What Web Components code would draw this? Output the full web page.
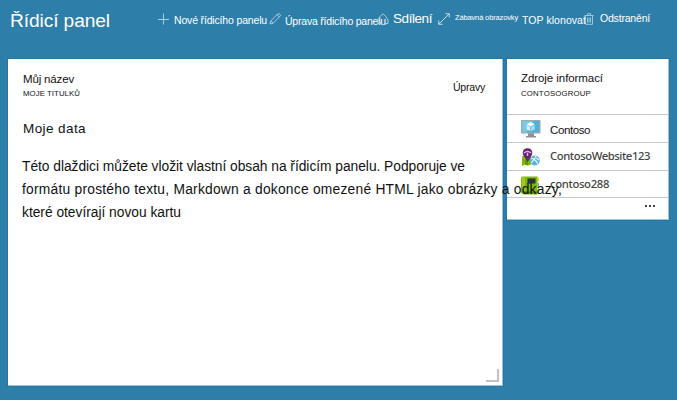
<!DOCTYPE html>
<html lang="cs">
<head>
<meta charset="utf-8">
<title>Řídicí panel</title>
<style>
html,body{margin:0;height:100%}
body{background:#2e7eaa;font-family:"Liberation Sans",Arial,sans-serif;overflow:hidden}
</style>
</head>
<body>
<dash-board></dash-board>
<script>
// A line of text whose tracking is adjusted to fill the given width.
class FitText extends HTMLElement {
  connectedCallback() {
    const root = this.attachShadow({mode:'open'});
    const size = this.getAttribute('size'), width = +this.getAttribute('width');
    root.innerHTML = `<style>
      :host{display:block;flex:none;width:${width}px;height:20px;line-height:20px;font-size:${size}px;white-space:nowrap}
      span{display:inline-block}
    </style><span><slot></slot></span>`;
    const span = root.querySelector('span');
    const extra = width - span.getBoundingClientRect().width;
    span.style.letterSpacing = (extra / this.textContent.length) + 'px';
  }
}

const icons = {
  plus:['0 0 12 12','<path d="M6.500 .5v11M1 6.500h11" stroke="#a9cde0" fill="none"/>'],
  pencil:['0 0 12 12','<path d="M1 11l.8-3.2L8.9.8Q10 .3 11 1.4q.8 1 .2 1.8L4.1 10.200zM8 1.700l2.300 2.300M1.900 7.800l2.200 2.300" stroke="#b4d3e3" fill="none" stroke-width=".9"/>'],
  bell:['0 0 12 13','<path d="M1 10.500V7Q1.300 5.500 2.500 5.200V4L6 .8l3.500 3.200v1.200Q11 5.700 11 7v3.500H8.500M1 10.500h2.500M3.500 9v2q2.500 1.600 5 0V9" stroke="#a9cde0" fill="none"/>'],
  expand:['0 0 12 12','<path d="M1 11L11 1M7.500.7h3.800v3.800M.7 7.500v3.800h3.800" stroke="#c0dae7" fill="none"/>'],
  trash:['0 0 10 12','<path d="M.5 2.500h9M3.500 2V.7h3V2M1.500 3v8.300h7V3M3.500 4.500v5M5 4.500v5M6.500 4.500v5" stroke="#a9cde0" fill="none" stroke-width=".9"/>'],
  monitor:['0 0 20 18','<path fill="#8b9195" d="M7 13h6v3h2v1.500H5V16h2z"/><path fill="#a0a8ac" d="M0 0h19.500v13.500H0z"/><path fill="#48b4d8" d="M1.200 1h17v11.300h-17z"/><path fill="#78cae4" d="M1.200 1h11L6 12.300H1.200z"/><path fill="#fff" d="M9.700 2l4 2.200-4 2.200-4-2.200z"/><path fill="#d2edf6" d="M5.600 5l3.700 2v4.200l-3.700-2z"/><path fill="#a5dcee" d="M13.800 5l-3.700 2v4.200l3.700-2z"/>'],
  website:['0 0 20 19','<path fill="#7fba00" d="M1 8.500l3-1 3 1 3-1v9l-3 1-3-1-3 1.500z"/><path fill="#5f9500" d="M4 8v8.600l3 1V8.500z"/><circle cx="6.500" cy="5" r="4.800" fill="#68217a"/><path fill="#68217a" d="M2.800 7.500L6.800 14l3.700-6.500z"/><path d="M3 5q3.600-3 7 0M6.500 5v3" stroke="#d9b7df" stroke-width="1.400" fill="none"/><circle cx="13.800" cy="12.500" r="5" fill="#59b4d9"/><path d="M10 10.500q4 .1 6.700 5M15.500 8.500q-2.700 3-5.200 6.500M14 8q2 3 4 4" stroke="#fff" stroke-width="1.100" fill="none"/>'],
  notebook:['0 0 20 20','<path fill="#f5cf22" d="M16.500 1.500H18v4h-1.500z"/><path fill="#59b4d9" d="M16.500 7H18v4h-1.500z"/><path fill="#e8d52c" d="M16.500 12.500H18v4h-1.500z"/><path fill="#7fba00" d="M1 .5h15.500v18H3Q0 18 0 15.500V1.500z"/><path fill="#528000" d="M1.500 15.500h15v2H3z"/><path fill="#9acb28" d="M1 1h3v14H1z"/><path fill="#28333d" d="M6.500 2.500h8v5h-8z"/>']
};
// Vector symbol chosen by name.
class UiIcon extends HTMLElement {
  connectedCallback() {
    const [box, art] = icons[this.getAttribute('name')];
    const [, , w, h] = box.split(' ');
    this.attachShadow({mode:'open'}).innerHTML =
      `<style>:host{display:block;flex:none;width:${w}px;height:${h}px}svg{display:block}</style><svg width="${w}" height="${h}" viewBox="${box}">${art}</svg>`;
  }
}

class BarAction extends HTMLElement {
  connectedCallback() {
    this.attachShadow({mode:'open'}).innerHTML =
      `<style>:host{display:flex;align-items:flex-start}::slotted(ui-icon){margin-top:13px;margin-right:5px}</style><slot name="icon"></slot><slot></slot>`;
  }
}

class TileCard extends HTMLElement {
  connectedCallback() {
    this.attachShadow({mode:'open'}).innerHTML =
      `<style>:host{display:flex;flex-direction:column;box-sizing:border-box;background:#fff;color:#111;box-shadow:0 0 0 1px #2576a2,inset -1px -1px #9ac5dc}</style><slot></slot>`;
  }
}

class ResourceRow extends HTMLElement {
  connectedCallback() {
    this.attachShadow({mode:'open'}).innerHTML =
      `<style>:host{display:flex;box-sizing:border-box;border-top:1px solid #c8c8c8;padding-left:14px}
      .icon{width:29px;flex:none;padding-top:5px}.label{padding-top:var(--label-top,5px)}</style><div class="icon"><slot name="icon"></slot></div><div class="label"><slot></slot></div>`;
  }
}

class DashBoard extends HTMLElement {
  connectedCallback() {
    this.attachShadow({mode:'open'}).innerHTML = `<style>
      :host{display:block;width:677px;height:400px}
      header{display:grid;grid-template-columns:147px 112px 108px 61px 84px 62px 80px;height:59px;padding-left:10px;color:#fff}
      .title{padding-top:11px}
      main{display:grid;grid-template-columns:495px 162px;gap:4px;padding-left:8px;align-items:start}
      .note{position:relative;z-index:1;height:327px;padding:10px 0 0 15px}
      .head{display:flex;justify-content:space-between;height:51px;padding-right:18px}
      .sub{margin-top:-5px}
      .copy{margin-top:16px;margin-left:-1px}
      .copy fit-text{height:23px;line-height:23px}
      .grip{position:absolute;right:4px;bottom:4px;width:11px;height:11px;border-right:2px solid #c2c2c2;border-bottom:2px solid #c2c2c2}
      .list{height:161px}
      .list .intro{height:55px;box-sizing:border-box;padding:9px 0 0 14px}
      .list .sub{margin-top:-4px}
      resource-row{height:28px}
      resource-row:nth-of-type(3){height:27px}
      .segoe{font-family:"Noto Sans","Open Sans",sans-serif;font-weight:500;color:#444}
      .more{display:flex;justify-content:flex-end;gap:2px;border-top:1px solid #c8c8c8;padding:7px 14px 0 0}
      .more i{width:2px;height:2px;background:#444}
    </style>
    <header>
      <fit-text class="title" size="19.2" width="100">Řídicí panel</fit-text>
      <bar-action><ui-icon slot="icon" name="plus"></ui-icon><fit-text size="10.5" width="93" style="margin-top:10px">Nové řídicího panelu</fit-text></bar-action>
      <bar-action><ui-icon slot="icon" name="pencil"></ui-icon><fit-text size="10.5" width="101" style="margin-top:11px;margin-left:-1px">Úprava řídicího panelu</fit-text></bar-action>
      <bar-action><ui-icon slot="icon" name="bell"></ui-icon><fit-text size="13.5" width="39" style="margin-top:9px;margin-left:-1px">Sdílení</fit-text></bar-action>
      <bar-action><ui-icon slot="icon" name="expand"></ui-icon><fit-text size="7.5" width="63" style="margin-top:8px">Zábavná obrazovky</fit-text></bar-action>
      <bar-action><fit-text size="10.5" width="64" style="margin-top:10px">TOP klonovat</fit-text></bar-action>
      <bar-action><ui-icon slot="icon" name="trash"></ui-icon><fit-text size="10.5" width="50" style="margin-top:8px;margin-left:1px">Odstranění</fit-text></bar-action>
    </header>
    <main>
      <tile-card class="note">
        <div class="head">
          <div><fit-text size="11.5" width="51">Můj název</fit-text><fit-text class="sub" size="7.8" width="57">MOJE TITULKŮ</fit-text></div>
          <fit-text size="10.5" width="32" style="margin-top:8px">Úpravy</fit-text>
        </div>
        <fit-text size="13.5" width="63" style="margin-top:-1px">Moje data</fit-text>
        <div class="copy">
          <fit-text size="13.8" width="443">Této dlaždici můžete vložit vlastní obsah na řídicím panelu. Podporuje ve</fit-text>
          <fit-text size="13.8" width="540">formátu prostého textu, Markdown a dokonce omezené HTML jako obrázky a odkazy,</fit-text>
          <fit-text size="13.8" width="159">které otevírají novou kartu</fit-text>
        </div>
        <div class="grip"></div>
      </tile-card>
      <tile-card class="list">
        <div class="intro"><fit-text size="11.5" width="82">Zdroje informací</fit-text><fit-text class="sub" size="7.8" width="70">CONTOSOGROUP</fit-text></div>
        <resource-row><ui-icon slot="icon" name="monitor"></ui-icon><fit-text size="11.5" width="40">Contoso</fit-text></resource-row>
        <resource-row style="--label-top:3px"><ui-icon slot="icon" name="website"></ui-icon><fit-text class="segoe" size="11.3" width="100">ContosoWebsite123</fit-text></resource-row>
        <resource-row style="--label-top:3px"><ui-icon slot="icon" name="notebook"></ui-icon><fit-text class="segoe" size="11.3" width="59">contoso288</fit-text></resource-row>
        <div class="more"><i></i><i></i><i></i></div>
      </tile-card>
    </main>`;
  }
}
customElements.define('fit-text', FitText);
customElements.define('ui-icon', UiIcon);
customElements.define('bar-action', BarAction);
customElements.define('tile-card', TileCard);
customElements.define('resource-row', ResourceRow);
customElements.define('dash-board', DashBoard);
</script>
</body>
</html>
